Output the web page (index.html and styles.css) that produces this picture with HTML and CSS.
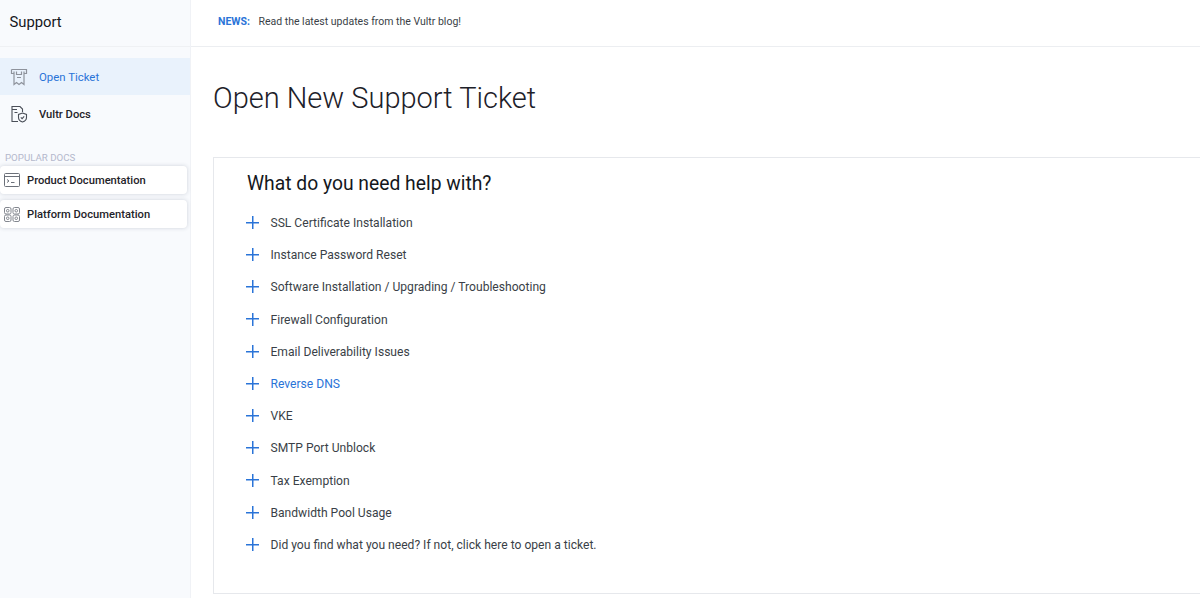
FILE: index.html
```html
<!DOCTYPE html>
<html lang="en">

<head>
    <meta charset="UTF-8">
    <title>Open New Support Ticket</title>
    <link rel="stylesheet" href="styles.css">
</head>

<body>
    <!-- Sidebar -->
    <div class="sidebar">
        <div class="sidebar-title">Support</div>

        <a class="side-link active" href="#">
            <svg class="side-icon" width="18" height="18" viewBox="0 0 18 18" fill="none" stroke="#8e939c" stroke-width="1.2">
                <path d="M1.500 1.500h15v4h-2.500M1.500 1.500v4h2.500" />
                <path d="M4 3.500v13l2.500-2 2.500 2 2.500-2 2.500 2v-13" />
                <path d="M6.500 3.500v3h5v-3M7 9.500h4" />
            </svg>
            <span>Open Ticket</span>
        </a>
        <a class="side-link" href="#">
            <svg class="side-icon" width="18" height="18" viewBox="0 0 18 18" fill="none" stroke="#4a4f58" stroke-width="1.1">
                <path d="M8 16.500H2V1.500h8l2.500 2.500v3" />
                <path d="M2 4.500h5M4.500 7.500h3" />
                <path d="M12.500 8l4 1.500v3c0 2.200-1.800 3.800-4 4.500-2.200-.7-4-2.300-4-4.500v-3z" />
                <path d="M10.800 12.300l1.300 1.300 2.100-2.300" />
            </svg>
            <span>Vultr Docs</span>
        </a>

        <div class="side-heading">POPULAR DOCS</div>

        <a class="doc-card" href="#">
            <svg width="16" height="14" viewBox="0 0 16 14" fill="none" stroke="#6b7079" stroke-width="1">
                <rect x="0.500" y="0.500" width="15" height="13" rx="1" />
                <path d="M0.500 3.500h15M3 6.500l2 1.500-2 1.500M7 9.500h3.500" />
            </svg>
            <span>Product Documentation</span>
        </a>
        <a class="doc-card" href="#">
            <svg width="16" height="15" viewBox="0 0 16 15" fill="none" stroke="#83878f" stroke-width="1">
                <rect x="0.500" y="0.500" width="6.500" height="6.500" rx="1.500" />
                <rect x="9" y="0.500" width="6.500" height="6.500" rx="1.500" />
                <rect x="0.500" y="8" width="6.500" height="6.500" rx="1.500" />
                <rect x="9" y="8" width="6.500" height="6.500" rx="1.500" />
                <circle cx="3.750" cy="3.750" r="1.300" />
                <circle cx="12.250" cy="3.750" r="1.300" />
                <circle cx="3.750" cy="11.250" r="1.300" />
                <circle cx="12.250" cy="11.250" r="1.300" />
            </svg>
            <span>Platform Documentation</span>
        </a>
    </div>

    <div class="main">
        <!-- News bar -->
        <div class="news">
            <b>NEWS:</b>
            <span>Read the latest updates from the Vultr blog!</span>
        </div>

        <h1>Open New Support Ticket</h1>

        <div class="panel">
            <h2>What do you need help with?</h2>
            <ul class="topics">
                <li><i class="plus"></i>SSL Certificate Installation</li>
                <li><i class="plus"></i>Instance Password Reset</li>
                <li><i class="plus"></i>Software Installation / Upgrading / Troubleshooting</li>
                <li><i class="plus"></i>Firewall Configuration</li>
                <li><i class="plus"></i>Email Deliverability Issues</li>
                <li class="current"><i class="plus"></i>Reverse DNS</li>
                <li><i class="plus"></i>VKE</li>
                <li><i class="plus"></i>SMTP Port Unblock</li>
                <li><i class="plus"></i>Tax Exemption</li>
                <li><i class="plus"></i>Bandwidth Pool Usage</li>
                <li><i class="plus"></i>Did you find what you need? If not, click here to open a ticket.</li>
            </ul>
        </div>
    </div>
</body>

</html>
```

FILE: styles.css
```css
html,
body {
    height: 100%;
}

body {
    margin: 0;
    display: flex;
    overflow: hidden;
    background: #fff;
    color: #3a3f47;
    font-family: Roboto, sans-serif;
}

a {
    text-decoration: none;
}

.sidebar {
    flex: 0 0 191px;
    box-sizing: border-box;
    background: #f8fafd;
    border-right: 1px solid #f0f2f6;
}

.sidebar-title {
    height: 47px;
    box-sizing: border-box;
    padding: 13px 0 0 9.500px;
    margin-bottom: 11px;
    font-size: 14.800px;
    line-height: 19px;
    color: #14171c;
    border-bottom: 1px solid #eff1f4;
}

.side-link {
    display: flex;
    align-items: center;
    height: 38px;
    padding-left: 10px;
    font-size: 11.200px;
    font-weight: 500;
    color: #1f2329;
}

.side-link.active {
    height: 37px;
    background: #e9f2fc;
    color: #2a74d8;
    font-size: 11.400px;
    font-weight: 400;
}

.side-icon {
    margin-right: 11px;
}

.side-heading {
    margin: 19px 0 2px 5px;
    font-size: 9.700px;
    line-height: 12px;
    color: #b4b8cc;
}

.doc-card {
    display: flex;
    align-items: center;
    gap: 7px;
    height: 28px;
    width: 187px;
    box-sizing: border-box;
    margin-bottom: 6px;
    padding-left: 4px;
    background: #fff;
    border-radius: 4px;
    box-shadow: 0 0 4px rgba(40, 50, 80, 0.2);
    font-size: 11.200px;
    font-weight: 500;
    color: #1f2329;
}

.main {
    flex: 1;
    min-width: 0;
}

.news {
    display: flex;
    gap: 8.500px;
    height: 47px;
    box-sizing: border-box;
    padding: 15px 0 0 27px;
    font-size: 10.500px;
    line-height: 14px;
    color: #3a3f47;
    border-bottom: 1px solid #eceef1;
}

.news b {
    color: #2a74d8;
    font-weight: 700;
}

h1 {
    margin: 33px 0 40px 22px;
    font-size: 29px;
    line-height: 37px;
    font-weight: 300;
    color: #1d2129;
}

.panel {
    height: 437px;
    box-sizing: border-box;
    margin-left: 22px;
    padding: 14px 0 0 33px;
    border: 1px solid #e6e8ec;
    border-right: 0;
}

h2 {
    margin: 0 0 12px;
    font-size: 19.300px;
    line-height: 23px;
    font-weight: 400;
    color: #14171c;
}

.topics {
    margin: 0;
    padding: 0;
    list-style: none;
}

.topics li {
    display: flex;
    align-items: center;
    height: 32.200px;
    font-size: 12.100px;
}

.topics li.current {
    color: #2a74d8;
}

.plus {
    flex: none;
    width: 13px;
    height: 13px;
    margin: 0 11.500px 1px -1px;
    background: linear-gradient(#2a74d8, #2a74d8) center / 100% 1.500px no-repeat,
        linear-gradient(#2a74d8, #2a74d8) center / 1.500px 100% no-repeat;
}
```
